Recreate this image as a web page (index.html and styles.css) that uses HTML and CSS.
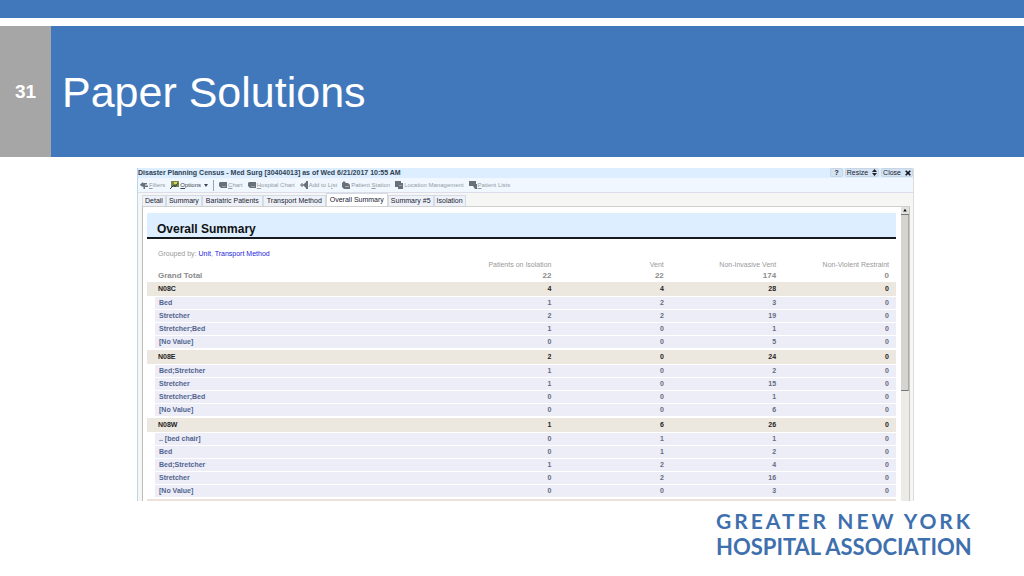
FILE: index.html
```
<!DOCTYPE html>
<html lang="en">
<head>
  <meta charset="UTF-8">
  <title>Paper Solutions</title>
  <link rel="stylesheet" href="styles.css">
</head>
<body>
  <div class="top-bar"></div>
  <header class="banner">
    <div class="page-number">31</div>
    <h1>Paper Solutions</h1>
  </header>

  <main class="census">
    <div class="title-bar">
      <h2>Disaster Planning Census - Med Surg [30404013] as of Wed 6/21/2017 10:55 AM</h2>
      <div class="window-buttons">
        <button type="button">?</button>
        <button type="button">Resize
          <svg width="5" height="7" viewBox="0 0 5 7"><path d="M2.5 0L5 3H0zM2.5 7L0 4h5z" fill="#223"/></svg>
        </button>
        <button type="button">Close
          <svg width="6" height="6" viewBox="0 0 6 6"><path d="M.7.7l4.6 4.6M5.3.7L.7 5.3" stroke="#112" stroke-width="1.6"/></svg>
        </button>
      </div>
    </div>

    <div class="toolbar">
      <button type="button" disabled>
        <svg width="8" height="8" viewBox="0 0 8 8"><path d="M0 3.500L3 1v1h4v1.500H5v1h3V6H5v2H3.500V6L1 5z" fill="#68727c"/></svg><span><u>F</u>ilters</span>
      </button>
      <button type="button" class="options">
        <svg width="9" height="8" viewBox="0 0 9 8"><path d="M1 0h8v6H1z" fill="#7b8850"/><path d="M0 8l4-4 1 2 3-4" stroke="#34434c" fill="none"/><path d="M4 1h3v2H4z" fill="#d8d94b"/></svg><span><u>O</u>ptions</span>
        <svg width="4" height="3" viewBox="0 0 4 3"><path d="M0 0h4L2 3z" fill="#445"/></svg>
      </button>
      <span class="divider"></span>
      <button type="button" disabled>
        <svg width="8" height="8" viewBox="0 0 8 8"><path d="M1 1h7v6H2L0 5V2z" fill="#68707a"/><path d="M3 5.500h4" stroke="#98a0a8"/></svg><span><u>C</u>hart</span>
      </button>
      <button type="button" disabled>
        <svg width="8" height="8" viewBox="0 0 8 8"><path d="M1 1h7v6H2L0 5V2z" fill="#68707a"/><path d="M3 5.500h4" stroke="#98a0a8"/></svg><span><u>H</u>ospital Chart</span>
      </button>
      <button type="button" disabled>
        <svg width="8" height="8" viewBox="0 0 8 8"><path d="M0 4h4M2 2v4" stroke="#68707a"/><path d="M3 4l3-3v6zM6 0h2v8H6z" fill="#68707a"/></svg><span>Add to L<u>i</u>st</span>
      </button>
      <button type="button" disabled>
        <svg width="8" height="8" viewBox="0 0 8 8"><path d="M0 2l2-2 2 2h2l2 2v4H2L0 6z" fill="#68707a"/><path d="M3 5.500h4" stroke="#a0a8b0"/></svg><span>Patient <u>S</u>tation</span>
      </button>
      <button type="button" disabled>
        <svg width="8" height="8" viewBox="0 0 8 8"><path d="M0 0h6v2h2v6H3V6H0z" fill="#68707a"/><path d="M4 4h3v1H4z" fill="#9aa0a6"/></svg><span>Location Management</span>
      </button>
      <button type="button" disabled>
        <svg width="8" height="8" viewBox="0 0 8 8"><path d="M0 0h7v3h1v5H6L4 5H0z" fill="#68707a"/></svg><span><u>P</u>atient Lists</span>
      </button>
    </div>

    <nav class="tabs">
      <button type="button">Detail</button>
      <button type="button">Summary</button>
      <button type="button" class="wide">Bariatric Patients</button>
      <button type="button" class="wide">Transport Method</button>
      <button type="button" class="wide active">Overall Summary</button>
      <button type="button">Summary #5</button>
      <button type="button">Isolation</button>
    </nav>

    <div class="content">
      <section class="report">
        <h3>Overall Summary</h3>
        <p class="grouped">Grouped by: <a href="#">Unit</a>, <a href="#">Transport Method</a></p>
        <table>
          <colgroup>
            <col class="name">
            <col class="count">
            <col class="count">
            <col class="count">
            <col>
          </colgroup>
          <thead>
            <tr><th></th><th>Patients on Isolation</th><th>Vent</th><th>Non-Invasive Vent</th><th>Non-Violent Restraint</th></tr>
            <tr class="total"><td>Grand Total</td><td>22</td><td>22</td><td>174</td><td>0</td></tr>
          </thead>
          <tbody>
            <tr class="unit"><td>N08C</td><td>4</td><td>4</td><td>28</td><td>0</td></tr>
            <tr><td>Bed</td><td>1</td><td>2</td><td>3</td><td>0</td></tr>
            <tr><td>Stretcher</td><td>2</td><td>2</td><td>19</td><td>0</td></tr>
            <tr><td>Stretcher;Bed</td><td>1</td><td>0</td><td>1</td><td>0</td></tr>
            <tr><td>[No Value]</td><td>0</td><td>0</td><td>5</td><td>0</td></tr>
          </tbody>
          <tbody>
            <tr class="unit"><td>N08E</td><td>2</td><td>0</td><td>24</td><td>0</td></tr>
            <tr><td>Bed;Stretcher</td><td>1</td><td>0</td><td>2</td><td>0</td></tr>
            <tr><td>Stretcher</td><td>1</td><td>0</td><td>15</td><td>0</td></tr>
            <tr><td>Stretcher;Bed</td><td>0</td><td>0</td><td>1</td><td>0</td></tr>
            <tr><td>[No Value]</td><td>0</td><td>0</td><td>6</td><td>0</td></tr>
          </tbody>
          <tbody>
            <tr class="unit"><td>N08W</td><td>1</td><td>6</td><td>26</td><td>0</td></tr>
            <tr><td>.. [bed chair]</td><td>0</td><td>1</td><td>1</td><td>0</td></tr>
            <tr><td>Bed</td><td>0</td><td>1</td><td>2</td><td>0</td></tr>
            <tr><td>Bed;Stretcher</td><td>1</td><td>2</td><td>4</td><td>0</td></tr>
            <tr><td>Stretcher</td><td>0</td><td>2</td><td>16</td><td>0</td></tr>
            <tr><td>[No Value]</td><td>0</td><td>0</td><td>3</td><td>0</td></tr>
          </tbody>
        </table>
        <div class="next-unit"></div>
      </section>
      <div class="scrollbar">
        <svg class="arrow" width="8" height="8" viewBox="0 0 8 8"><path d="M4 2l2 3H2z" fill="#111"/></svg>
        <div class="thumb"></div>
      </div>
    </div>
  </main>

  <footer class="logo">
    <div class="line-one">GREATER NEW YORK</div>
    <div class="line-two">HOSPITAL ASSOCIATION</div>
  </footer>
</body>
</html>
```

FILE: styles.css
```
* {
  box-sizing: border-box;
}
body {
  margin: 0;
  background: #fff;
  font-family: "Liberation Sans", Arial, sans-serif;
}
h1, h2, h3, p {
  margin: 0;
}
button {
  display: flex;
  align-items: center;
  margin: 0;
  padding: 0;
  border: none;
  background: none;
  font: inherit;
  color: inherit;
  white-space: nowrap;
}

/* Slide heading */
.top-bar {
  height: 18px;
  margin-bottom: 8px;
  background: #4178bc;
}
.banner {
  display: flex;
  height: 131px;
  background: #4178bc;
  color: #fff;
}
.page-number {
  display: flex;
  align-items: center;
  justify-content: center;
  width: 51px;
  background: #a6a6a6;
  font-size: 19px;
  font-weight: bold;
}
.banner h1 {
  align-self: center;
  padding: 2px 0 0 11px;
  font-size: 43px;
  font-weight: normal;
}

/* Census window */
.census {
  margin: 11px 110px 0 137px;
  border-left: 1px solid #b9d8ee;
  border-right: 1px solid #dcdcdc;
  background: #f6f6f4;
  font-size: 7px;
  line-height: 10px;
}
.title-bar {
  display: flex;
  justify-content: space-between;
  height: 10px;
  background: #dceeff;
  color: #2e3f52;
}
.title-bar h2 {
  font-size: 7px;
  line-height: 10px;
}
.window-buttons {
  display: flex;
  gap: 2px;
  color: #223;
}
.window-buttons button {
  gap: 4px;
  padding: 0 1px;
  height: 9px;
  border: 1px solid #c8d6e4;
  border-radius: 2px;
  background: #d3e3f2;
}
.window-buttons button:first-child {
  padding: 0 3px;
  font-weight: bold;
}
.toolbar {
  display: flex;
  align-items: center;
  gap: 5px;
  height: 15px;
  padding: 0 2px;
  border-bottom: 1px solid #dcdcea;
  background: #f0f7ff;
  color: #959ba2;
  font-size: 6px;
}
.toolbar button {
  gap: 1px;
}
.toolbar .options {
  color: #3a444c;
}
.toolbar .options svg:last-child {
  margin-left: 2px;
}
.divider {
  height: 11px;
  border-left: 1px solid #9aa4ae;
}
.tabs {
  display: flex;
  align-items: flex-end;
  height: 13px;
  padding-left: 4px;
}
.tabs button {
  height: 11px;
  padding: 0 2px;
  border: 1px solid #d3dbe5;
  border-bottom: none;
  background: #eef2f8;
  color: #223;
}
.tabs .wide {
  padding: 0 3px;
}
.tabs .active {
  height: 13px;
  background: #fff;
}
.content {
  display: flex;
  margin: 0 3px 0 4px;
  border-top: 1px solid #d0d0ce;
  border-left: 1px solid #bcbcbc;
  border-right: 1px solid #c4c4c0;
  background: #fff;
}
.report {
  flex: 1;
  padding: 6px 5px 0 4px;
}
.report h3 {
  height: 26px;
  padding-left: 10px;
  border-bottom: 2px solid #16191d;
  background: #dceeff;
  color: #111;
  font-size: 12px;
  line-height: 32px;
}
.grouped {
  padding: 10px 0 0 11px;
  color: #999;
}
.grouped a {
  color: #2424dd;
  text-decoration: none;
}
table {
  width: 100%;
  border-collapse: separate;
  border-spacing: 0;
  table-layout: fixed;
}
.name {
  width: 39%;
}
.count {
  width: 15%;
}
th, td {
  height: 13px;
  padding: 0;
  border-bottom: 1px solid #fff;
  background: #ecedf7;
  color: #666a80;
  font-weight: bold;
  line-height: 12px;
  text-align: right;
}
th:first-child, td:first-child {
  padding-left: 4px;
  border-left: 8px solid #fff;
  color: #52648f;
  text-align: left;
}
th:last-child, td:last-child {
  padding-right: 7px;
}
thead th, thead td {
  height: 11px;
  border: none;
  background: #fff;
  color: #999;
  line-height: 11px;
}
thead th {
  font-weight: normal;
}
thead td:first-child {
  padding-left: 11px;
  border: none;
  color: #8b8b8b;
}
thead .total td {
  color: #8b8b8b;
  font-size: 8px;
}
.unit td {
  height: 16px;
  border-top: 1px solid #fff;
  background: #ede8df;
  color: #222;
  line-height: 14px;
}
.unit td:first-child {
  padding-left: 11px;
  border-left: none;
  color: #222;
}
.next-unit {
  height: 3px;
  border-top: 1px solid #fff;
  background: #ede1da;
}
.scrollbar {
  width: 8px;
  background: #ecebe8;
}
.arrow {
  display: block;
  background: #e2e1dd;
  border-bottom: 1px solid #777;
}
.thumb {
  height: 60%;
  border-right: 1px solid #aaa;
  border-bottom: 1px solid #777;
  background: #d5d4d0;
}

/* Association name */
.logo {
  width: 256px;
  margin: 7px 52px 0 auto;
  color: #3f70ae;
  font-family: Lato, sans-serif;
  font-size: 21px;
  font-weight: bold;
  line-height: 26px;
  white-space: nowrap;
}
.line-one {
  letter-spacing: 3px;
}
.line-two {
  font-size: 22px;
}
```
